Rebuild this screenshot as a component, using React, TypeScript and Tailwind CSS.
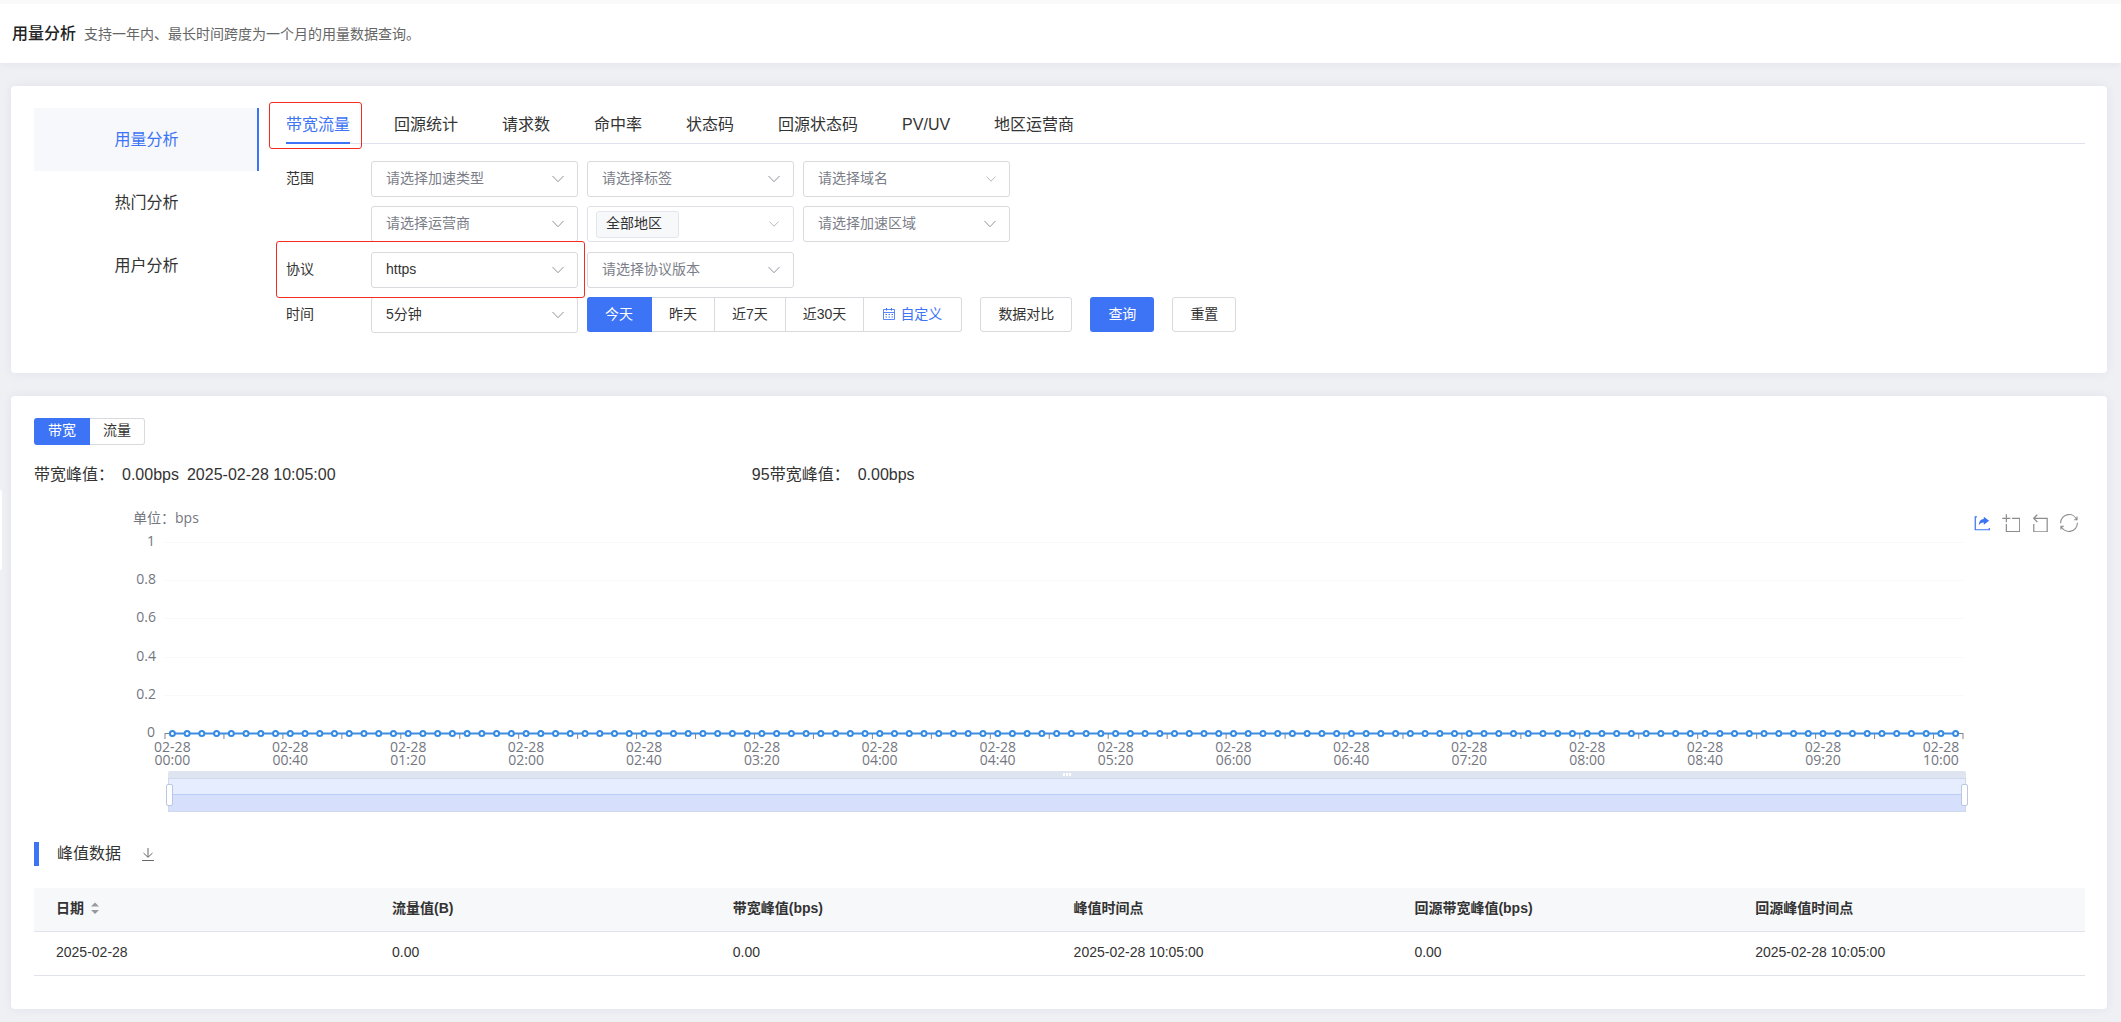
import { useState } from 'react';
import clsx from 'clsx';

const NAV = ['用量分析', '热门分析', '用户分析'];
const TABS = ['带宽流量', '回源统计', '请求数', '命中率', '状态码', '回源状态码', 'PV/UV', '地区运营商'];
const RANGES = ['今天', '昨天', '近7天', '近30天'];
const COLUMNS = ['日期', '流量值(B)', '带宽峰值(bps)', '峰值时间点', '回源带宽峰值(bps)', '回源峰值时间点'];
const ROWS = [['2025-02-28', '0.00', '0.00', '2025-02-28 10:05:00', '0.00', '2025-02-28 10:05:00']];

const POINTS = 122;
const pct = (band: number) => `${(band / POINTS) * 100}%`;
const Y_TICKS = ['1', '0.8', '0.6', '0.4', '0.2', '0'];
const PLOT_HEIGHT = 191;
const AXIS_TICKS = [...Array.from({ length: 31 }, (_, i) => i * 4), POINTS];
const AXIS_LABELS = Array.from({ length: 16 }, (_, i) => {
  const minutes = i * 40;
  const hh = String(Math.floor(minutes / 60)).padStart(2, '0');
  const mm = String(minutes % 60).padStart(2, '0');
  return { band: i * 8 + 0.5, time: `${hh}:${mm}` };
});

function Chevron({ small }: { small?: boolean }) {
  return (
    <svg
      viewBox="0 0 12 7"
      aria-hidden="true"
      className={clsx('pointer-events-none absolute top-1/2 right-[14px] -translate-y-1/2', small ? 'w-[10px] text-[#a9acb4]' : 'w-3 text-[#8f9299]')}
    >
      <path d="M0.5 0.5 L6 6.2 L11.5 0.5" fill="none" stroke="currentColor" />
    </svg>
  );
}

function Select({ label, value, small }: { label: string; value?: string; small?: boolean }) {
  return (
    <div className="relative w-[207px]">
      <select
        aria-label={label}
        className={clsx(
          'h-9 w-full appearance-none rounded-[3px] border border-[#d9dadd] bg-white pr-8 pb-[2px] pl-[14px] text-sm',
          value ? 'text-[#333]' : 'text-[#7b7e88]',
        )}
      >
        <option>{value ?? label}</option>
      </select>
      <Chevron small={small} />
    </div>
  );
}

function RegionSelect() {
  return (
    <button type="button" aria-haspopup="listbox" aria-label="地区：全部地区" className="relative flex h-9 w-[207px] items-center rounded-[3px] border border-[#dfe1e9] bg-white pl-2">
      <span className="flex h-[27px] w-[83px] items-center rounded-[3px] border border-[#e3e6ee] bg-[#f7f8fa] pb-[2px] pl-[9px] text-sm text-[#333]">全部地区</span>
      <Chevron small />
    </button>
  );
}

function CalendarIcon() {
  return (
    <svg viewBox="0 0 12 12" aria-hidden="true" className="w-3">
      <g fill="none" stroke="currentColor">
        <path d="M0.5 1.5 H11.5 V11.5 H0.5 Z M0.5 4.5 H11.5" strokeOpacity="0.85" />
        <path d="M3.5 0 V2.5 M8.5 0 V2.5" />
        <path d="M2.5 6.5 H10 M2.5 9 H10" strokeDasharray="1.5 1.5" />
      </g>
    </svg>
  );
}

const outlined = 'h-[35px] rounded-[3px] border border-[#d9dadd] bg-white px-[17px] pb-[2px] text-sm text-[#333]';

function Filters() {
  const [range, setRange] = useState(0);
  return (
    <div className="mt-[17px] text-sm text-[#333]">
      <div className="flex">
        <span className="w-[85px] shrink-0 leading-[34px]">范围</span>
        <div className="grid grid-cols-[207px_207px_207px] gap-[9px]">
          <Select label="请选择加速类型" />
          <Select label="请选择标签" />
          <Select label="请选择域名" small />
          <Select label="请选择运营商" />
          <RegionSelect />
          <Select label="请选择加速区域" />
        </div>
      </div>
      <div className="mt-[10px] flex gap-[9px]">
        <div className="relative flex">
          <span className="w-[85px] shrink-0 leading-[34px]">协议</span>
          <Select label="协议" value="https" />
          <span className="pointer-events-none absolute -top-[11px] -right-[7px] -bottom-[10px] -left-[10px] z-10 rounded-[3px] border border-[#f32c22]" />
        </div>
        <Select label="请选择协议版本" />
      </div>
      <div className="mt-[9px] flex gap-[9px]">
        <div className="flex">
          <span className="w-[85px] shrink-0 leading-[34px]">时间</span>
          <Select label="时间" value="5分钟" />
        </div>
        <div className="flex gap-[18px]">
          <div className="flex">
            {RANGES.map((name, i) => (
              <button
                key={name}
                type="button"
                onClick={() => setRange(i)}
                className={clsx(
                  'h-[35px] border-y border-r px-[17px] pb-[2px] text-sm first:rounded-l-[3px] first:px-[18px]',
                  i === range ? 'border-[#3d73f5] bg-[#3d73f5] text-white' : 'border-[#d9dadd] bg-white text-[#333]',
                )}
              >
                {name}
              </button>
            ))}
            <button type="button" className="flex h-[35px] items-center gap-[5px] rounded-r-[3px] border-y border-r border-[#d9dadd] px-[19px] pb-[2px] text-sm text-[#3d73f5]">
              <CalendarIcon />
              自定义
            </button>
          </div>
          <button type="button" className={outlined}>数据对比</button>
          <button type="button" className="h-[35px] rounded-[3px] bg-[#3d73f5] px-[18px] pb-[2px] text-sm text-white">查询</button>
          <button type="button" className={outlined}>重置</button>
        </div>
      </div>
    </div>
  );
}

function Toolbox() {
  return (
    <div className="absolute top-[6px] right-[7px] flex items-center gap-[11px] text-[#8c8c8c]">
      <button type="button" aria-label="导出" className="text-[#3d73f5]">
        <svg viewBox="0 0 16 16" className="size-[18px]">
          <path d="M3.5 2.5 H2 V14 H14.5 V12.5" fill="none" stroke="currentColor" strokeWidth="1.1" />
          <path d="M9.6 2.5 L14.3 6 L9.6 9.5 V7.5 C7.6 7.4 6.3 8.2 5.2 10 C5.3 6.8 6.8 4.7 9.6 4.5 Z" fill="currentColor" />
        </svg>
      </button>
      <button type="button" aria-label="区域缩放">
        <svg viewBox="-1 -1 60 60" className="size-[18px]">
          <path d="M0,13.5h26.9 M13.5,26.9V0 M32.1,13.5H58V58H13.5 V32.1" fill="none" stroke="currentColor" strokeWidth="4" />
        </svg>
      </button>
      <button type="button" aria-label="区域缩放还原">
        <svg viewBox="1 -1 60 60" className="size-[18px]">
          <path d="M22,1.4L9.9,13.5l12.3,12.3 M10.3,13.5H54.9v44.6 H10.3v-26" fill="none" stroke="currentColor" strokeWidth="4" />
        </svg>
      </button>
      <button type="button" aria-label="还原">
        <svg viewBox="0 0 60 60" className="size-[18px]">
          <path
            d="M47,18.9h9.8V8.7 M56.3,20.1 C52.1,9,40.5,0.6,26.8,2.1C12.6,3.7,1.6,16.2,2.1,30.6 M13,41.1H3.1v10.2 M3.7,39.9c4.2,11.1,15.8,19.5,29.5,18 c14.2-1.6,25.2-14.1,24.7-28.5"
            fill="none"
            stroke="currentColor"
            strokeWidth="3.6"
          />
        </svg>
      </button>
    </div>
  );
}

function Chart() {
  return (
    <div className="relative mt-[21px] font-['Open_Sans','Noto_Sans_CJK_SC',sans-serif] text-sm text-[#74767f]">
      <Toolbox />
      <div className="pl-[99px] leading-5">单位：bps</div>
      <div className="pt-[14px] pr-[122px] pl-[131px]">
        <svg className="block h-[229px] w-full overflow-visible" role="img" aria-label="带宽">
          {Y_TICKS.map((label, i) => {
            const y = Math.round((PLOT_HEIGHT / 5) * i);
            return (
              <g key={label}>
                {label !== '0' && <line x1="0" x2="100%" y1={y + 0.5} y2={y + 0.5} stroke="#f8f8fa" />}
                <text x={label.length > 1 ? -9 : -10} y={y + 4} textAnchor="end" fill="currentColor">{label}</text>
              </g>
            );
          })}
          <line x1="0" x2="100%" y1={PLOT_HEIGHT + 0.5} y2={PLOT_HEIGHT + 0.5} stroke="#83858d" />
          {AXIS_TICKS.map((band) => (
            <line key={band} x1={pct(band)} x2={pct(band)} y1={PLOT_HEIGHT} y2={PLOT_HEIGHT + 6} stroke="#83858d" />
          ))}
          <line x1={pct(0.5)} x2={pct(POINTS - 0.5)} y1={PLOT_HEIGHT + 0.5} y2={PLOT_HEIGHT + 0.5} stroke="#3f8ddd" strokeWidth="2" />
          {Array.from({ length: POINTS }, (_, i) => (
            <circle key={i} cx={pct(i + 0.5)} cy={PLOT_HEIGHT + 0.5} r="2.5" fill="#fff" stroke="#338be6" strokeWidth="2" />
          ))}
          {AXIS_LABELS.map(({ band, time }) => (
            <text key={time} y={PLOT_HEIGHT + 19} textAnchor="middle" fill="currentColor">
              <tspan x={pct(band)}>02-28</tspan>
              <tspan x={pct(band)} dy="13">{time}</tspan>
            </text>
          ))}
        </svg>
      </div>
      <div className="mr-[119px] ml-[134px]">
        <div className="flex h-[7px] items-center justify-center gap-px rounded-t-[2px] bg-[#dfe4f1]">
          <span className="h-[3px] w-[2px] bg-white" />
          <span className="h-[3px] w-[2px] bg-white" />
          <span className="h-[3px] w-[2px] bg-white" />
        </div>
        <div className="relative h-[34px] border border-[#d0d8ec] bg-[#e6edfe]">
          <div className="mt-[15px] h-[17px] border-t border-[#b9cdfa] bg-[#d6e0fd]" />
          <span className="absolute top-[5px] -left-[3px] h-[22px] w-[7px] rounded-[2px] border border-[#bac6e2] bg-white" />
          <span className="absolute top-[5px] -right-[3px] h-[22px] w-[7px] rounded-[2px] border border-[#bac6e2] bg-white" />
        </div>
      </div>
    </div>
  );
}

function PeakTable() {
  return (
    <table className="mt-[22px] w-full table-fixed border-collapse text-left text-sm text-[#333]">
      <thead className="bg-[#f7f8fa]">
        <tr className="h-[43px] border-b border-[#e0e3ec]">
          {COLUMNS.map((name, i) => (
            <th key={name} scope="col" className={clsx('pb-[2px] font-bold', i === 0 ? 'w-[347px] pl-[22px]' : 'pl-[11px]')}>
              {i === 0 ? (
                <button type="button" className="flex items-center gap-[7px] font-bold">
                  {name}
                  <svg viewBox="0 0 8 12" aria-hidden="true" className="w-2 fill-[#97999f]">
                    <path d="M0 4.5 L4 0.5 L8 4.5 Z M0 8 H8 L4 12 Z" />
                  </svg>
                </button>
              ) : (
                name
              )}
            </th>
          ))}
        </tr>
      </thead>
      <tbody>
        {ROWS.map((row) => (
          <tr key={row[0]} className="h-11 border-b border-[#e0e3ec]">
            {row.map((cell, i) => (
              <td key={i} className={clsx('pb-[2px]', i === 0 ? 'pl-[22px]' : 'pl-[11px]')}>{cell}</td>
            ))}
          </tr>
        ))}
      </tbody>
    </table>
  );
}

const card = 'rounded-[4px] bg-white shadow-[0_0_12px_rgba(30,40,80,0.06)]';

export default function App() {
  const [nav, setNav] = useState(0);
  const [tab, setTab] = useState(0);
  return (
    <div className="relative min-h-screen bg-[#eff0f4] pb-[13px] font-['Liberation_Sans','Noto_Sans_CJK_SC',sans-serif] text-[#333]">
      <header className="flex h-[63px] items-center gap-2 border-t-4 border-[#fafafa] bg-white pl-3 shadow-[0_1px_8px_rgba(30,40,80,0.06)]">
        <h1 className="text-base font-medium text-[#222]">用量分析</h1>
        <p className="text-sm text-[#666]">支持一年内、最长时间跨度为一个月的用量数据查询。</p>
      </header>
      <span className="absolute top-[490px] left-0 h-20 w-[2px] rounded-r-[2px] bg-white" />

      <main className="mr-[14px] ml-[11px]">
        <section className={clsx(card, 'mt-[23px] flex pt-[22px] pr-[22px] pb-10 pl-[23px]')}>
          <nav className="w-[225px] shrink-0">
            {NAV.map((name, i) => (
              <button
                key={name}
                type="button"
                onClick={() => setNav(i)}
                className={clsx('block h-[63px] w-full border-r-2 pl-[2px] text-base', i === nav ? 'border-[#3d73f5] bg-[#f7f8fb] text-[#3d73f5]' : 'border-transparent')}
              >
                {name}
              </button>
            ))}
          </nav>
          <div className="ml-[27px] min-w-0 flex-1">
            <div role="tablist" className="flex h-9 gap-11 border-b border-[#dfe2ee]">
              {TABS.map((name, i) => (
                <button
                  key={name}
                  type="button"
                  role="tab"
                  aria-selected={i === tab}
                  onClick={() => setTab(i)}
                  className={clsx('relative h-9 border-b-2 pb-px text-base', i === tab ? 'border-[#3d73f5] text-[#3d73f5]' : 'border-transparent')}
                >
                  {name}
                  {i === 0 && <span className="pointer-events-none absolute -top-[6px] -right-3 -bottom-[7px] -left-[17px] rounded-[3px] border border-[#f32c22]" />}
                </button>
              ))}
            </div>
            <Filters />
          </div>
        </section>

        <section className={clsx(card, 'mt-[23px] pt-[22px] pr-[22px] pb-[33px] pl-[23px]')}>
          <div className="flex text-sm">
            <button type="button" className="h-[27px] w-14 rounded-l-[3px] bg-[#3d73f5] pb-[3px] text-white">带宽</button>
            <button type="button" className="h-[27px] w-[55px] rounded-r-[3px] border-y border-r border-[#d9dadd] pb-[3px]">流量</button>
          </div>
          <div className="mt-[18px] flex text-base leading-6">
            <p className="flex w-[35%] gap-2">
              <span>带宽峰值：</span>
              <span>0.00bps</span>
              <span>2025-02-28 10:05:00</span>
            </p>
            <p className="flex gap-2">
              <span>95带宽峰值：</span>
              <span>0.00bps</span>
            </p>
          </div>
          <Chart />
          <div className="mt-[30px] flex h-6 items-center border-l-[5px] border-[#3d73f5] pl-[18px]">
            <h2 className="text-base">峰值数据</h2>
            <button type="button" aria-label="下载" className="ml-[21px] text-[#666]">
              <svg viewBox="0 0 12 13" className="w-3" fill="none" stroke="currentColor">
                <path d="M6 0 V9 M1.5 5 L6 9.3 L10.5 5 M0 12.5 H12" />
              </svg>
            </button>
          </div>
          <PeakTable />
        </section>
      </main>
    </div>
  );
}
